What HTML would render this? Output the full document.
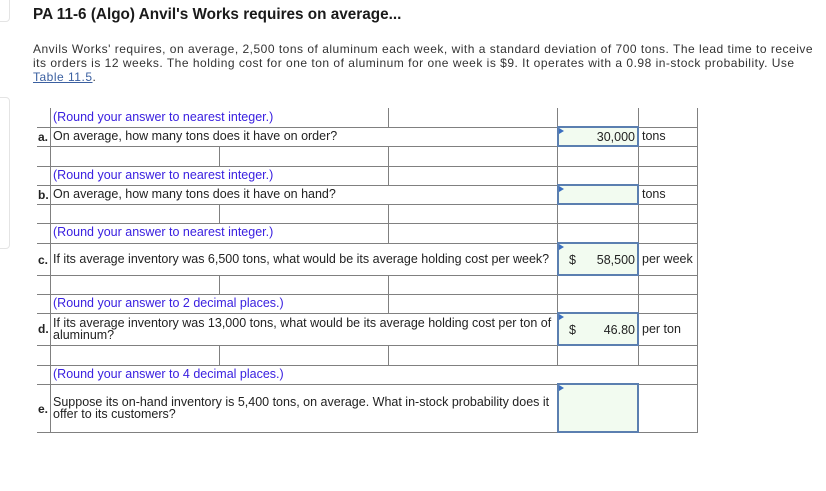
<!DOCTYPE html>
<html><head><meta charset="utf-8"><style>
body{margin:0;width:826px;height:491px;background:#fff;position:relative;overflow:hidden;font-family:"Liberation Sans",Arial,sans-serif}
.a{position:absolute}
.h{position:absolute;left:37px;width:660px;height:1px;background:#808080}
.v{position:absolute;width:1px;background:#808080}
.t{position:absolute;font-size:12.5px;color:#222;white-space:nowrap;line-height:13px}
.hint{color:#3a20e0}
.lab{position:absolute;font-size:12px;font-weight:bold;color:#222;left:38px}
.box{position:absolute;left:557px;width:78px;background:#f2fbf0;border:2px solid #5b7fb0}
.box:before{content:"";position:absolute;left:0;top:0;border-left:5px solid #3b6fc0;border-top:3px solid transparent;border-bottom:3px solid transparent}
.num{position:absolute;right:2px;font-size:12.5px;color:#222}
.dol{position:absolute;left:10px;font-size:12.5px;color:#222}
</style></head><body>
<div class="a" style="left:-8px;top:-5px;width:16px;height:25px;border:1px solid #e4e4e4;border-radius:4px"></div>
<div class="a" style="left:-8px;top:97px;width:16px;height:150px;border:1px solid #e4e4e4;border-radius:4px"></div>
<div class="a" style="left:33px;top:6px;font-size:15.3px;font-weight:bold;color:#1a1a1a">PA 11-6 (Algo) Anvil's Works requires on average...</div>
<div class="a" style="left:33px;top:42px;width:786px;font-size:12px;letter-spacing:0.5px;line-height:14px;color:#333">Anvils Works' requires, on average, 2,500 tons of aluminum each week, with a standard deviation of 700 tons. The lead time to receive its orders is 12 weeks. The holding cost for one ton of aluminum for one week is $9. It operates with a 0.98 in-stock probability. Use <span style="color:#3a5fa0;text-decoration:underline;white-space:nowrap">Table 11.5</span>.</div>

<div class="h" style="top:127px"></div><div class="h" style="top:146px"></div><div class="h" style="top:166px"></div><div class="h" style="top:185px"></div><div class="h" style="top:204px"></div><div class="h" style="top:223px"></div><div class="h" style="top:243px"></div><div class="h" style="top:275px"></div><div class="h" style="top:294px"></div><div class="h" style="top:313px"></div><div class="h" style="top:345px"></div><div class="h" style="top:365px"></div><div class="h" style="top:384px"></div><div class="h" style="top:432px"></div>
<div class="v" style="left:50px;top:108px;height:325px"></div>
<div class="v" style="left:697px;top:108px;height:325px"></div>
<div class="v" style="left:557px;top:108px;height:257px"></div>
<div class="v" style="left:638px;top:108px;height:257px"></div>
<div class="v" style="left:557px;top:384px;height:48px"></div>
<div class="v" style="left:638px;top:384px;height:48px"></div>
<div class="v" style="left:388px;top:108px;height:19px"></div>
<div class="v" style="left:388px;top:166px;height:19px"></div>
<div class="v" style="left:388px;top:223px;height:20px"></div>
<div class="v" style="left:388px;top:294px;height:19px"></div>
<div class="v" style="left:219px;top:146px;height:20px"></div><div class="v" style="left:388px;top:146px;height:20px"></div>
<div class="v" style="left:219px;top:204px;height:19px"></div><div class="v" style="left:388px;top:204px;height:19px"></div>
<div class="v" style="left:219px;top:275px;height:19px"></div><div class="v" style="left:388px;top:275px;height:19px"></div>
<div class="v" style="left:219px;top:345px;height:20px"></div><div class="v" style="left:388px;top:345px;height:20px"></div>

<div class="t hint" style="left:53px;top:111px">(Round your answer to nearest integer.)</div>
<div class="lab" style="top:130px">a.</div>
<div class="t" style="left:53px;top:130px">On average, how many tons does it have on order?</div>
<div class="box" style="top:126px;height:17px"><span class="num" style="top:2px">30,000</span></div>
<div class="t" style="left:642px;top:130px">tons</div>

<div class="t hint" style="left:53px;top:169px">(Round your answer to nearest integer.)</div>
<div class="lab" style="top:188px">b.</div>
<div class="t" style="left:53px;top:188px">On average, how many tons does it have on hand?</div>
<div class="box" style="top:184px;height:17px"></div>
<div class="t" style="left:642px;top:188px">tons</div>

<div class="t hint" style="left:53px;top:226px">(Round your answer to nearest integer.)</div>
<div class="lab" style="top:253px">c.</div>
<div class="t" style="left:53px;top:253px">If its average inventory was 6,500 tons, what would be its average holding cost per week?</div>
<div class="box" style="top:242px;height:30px"><span class="dol" style="top:9px">$</span><span class="num" style="top:9px">58,500</span></div>
<div class="t" style="left:642px;top:253px">per week</div>

<div class="t hint" style="left:53px;top:297px">(Round your answer to 2 decimal places.)</div>
<div class="lab" style="top:322px">d.</div>
<div class="t" style="left:53px;top:317px;line-height:12px">If its average inventory was 13,000 tons, what would be its average holding cost per ton of<br>aluminum?</div>
<div class="box" style="top:312px;height:30px"><span class="dol" style="top:9px">$</span><span class="num" style="top:9px">46.80</span></div>
<div class="t" style="left:642px;top:323px">per ton</div>

<div class="t hint" style="left:53px;top:368px">(Round your answer to 4 decimal places.)</div>
<div class="lab" style="top:402px">e.</div>
<div class="t" style="left:53px;top:396px;line-height:12px">Suppose its on-hand inventory is 5,400 tons, on average. What in-stock probability does it<br>offer to its customers?</div>
<div class="box" style="top:383px;height:46px"></div>
</body></html>
